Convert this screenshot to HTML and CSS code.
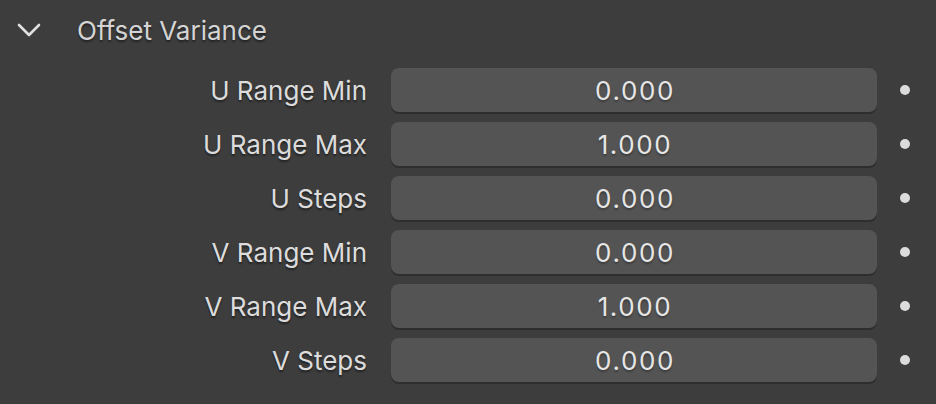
FILE: index.html
```html
<!DOCTYPE html>
<html lang="en">
<head>
  <meta charset="UTF-8">
  <title>Offset Variance</title>
  <link rel="stylesheet" href="styles.css">
</head>
<body>
  <div class="panel">
    <div class="panel-header">
      <svg class="chevron" width="24" height="14" viewBox="0 0 24 14">
        <path d="M2 2 L12 12 L22 2" fill="none" stroke="#e0e0e0" stroke-width="2.6" stroke-linecap="round" stroke-linejoin="round"/>
      </svg>
      <span class="panel-title">Offset Variance</span>
    </div>

    <div class="props">
      <div class="prop">
        <span class="prop-label">U Range Min</span>
        <div class="field">0.000</div>
        <span class="dot"></span>
      </div>
      <div class="prop">
        <span class="prop-label">U Range Max</span>
        <div class="field">1.000</div>
        <span class="dot"></span>
      </div>
      <div class="prop">
        <span class="prop-label">U Steps</span>
        <div class="field">0.000</div>
        <span class="dot"></span>
      </div>
      <div class="prop">
        <span class="prop-label">V Range Min</span>
        <div class="field">0.000</div>
        <span class="dot"></span>
      </div>
      <div class="prop">
        <span class="prop-label">V Range Max</span>
        <div class="field">1.000</div>
        <span class="dot"></span>
      </div>
      <div class="prop">
        <span class="prop-label">V Steps</span>
        <div class="field">0.000</div>
        <span class="dot"></span>
      </div>
    </div>
  </div>
</body>
</html>
```

FILE: styles.css
```css
* { box-sizing: border-box; }
body {
  margin: 0;
  background: #3d3d3d;
  font-family: Inter, "Noto Sans", "DejaVu Sans", sans-serif;
  font-size: 26px;
  color: #e2e2e2;
  overflow: hidden;
}
.panel-header {
  display: flex;
  align-items: center;
  height: 60px;
  padding-left: 17px;
}
.chevron {
  display: block;
  margin-right: 36px;
}
.panel-title {
  color: #d4d4d4;
  text-shadow: 0 2px 2px rgba(0,0,0,0.45);
}
.props {
  padding-top: 8px;
}
.prop {
  display: flex;
  align-items: center;
  height: 44px;
  margin-bottom: 10px;
}
.prop-label {
  width: 367px;
  text-align: right;
  color: #dcdcdc;
  text-shadow: 0 2px 2px rgba(0,0,0,0.45);
}
.field {
  width: 486px;
  height: 44px;
  margin-left: 24px;
  padding-left: 2px;
  display: flex;
  align-items: center;
  justify-content: center;
  background: #545454;
  border-radius: 8px;
  box-shadow: 0 2px 0 #2e2e2e;
  color: #e6e6e6;
  letter-spacing: 1.6px;
  text-shadow: 0 2px 2px rgba(0,0,0,0.3);
}
.dot {
  width: 10px;
  height: 10px;
  margin-left: 23px;
  border-radius: 50%;
  background: #dcdcdc;
}
```
